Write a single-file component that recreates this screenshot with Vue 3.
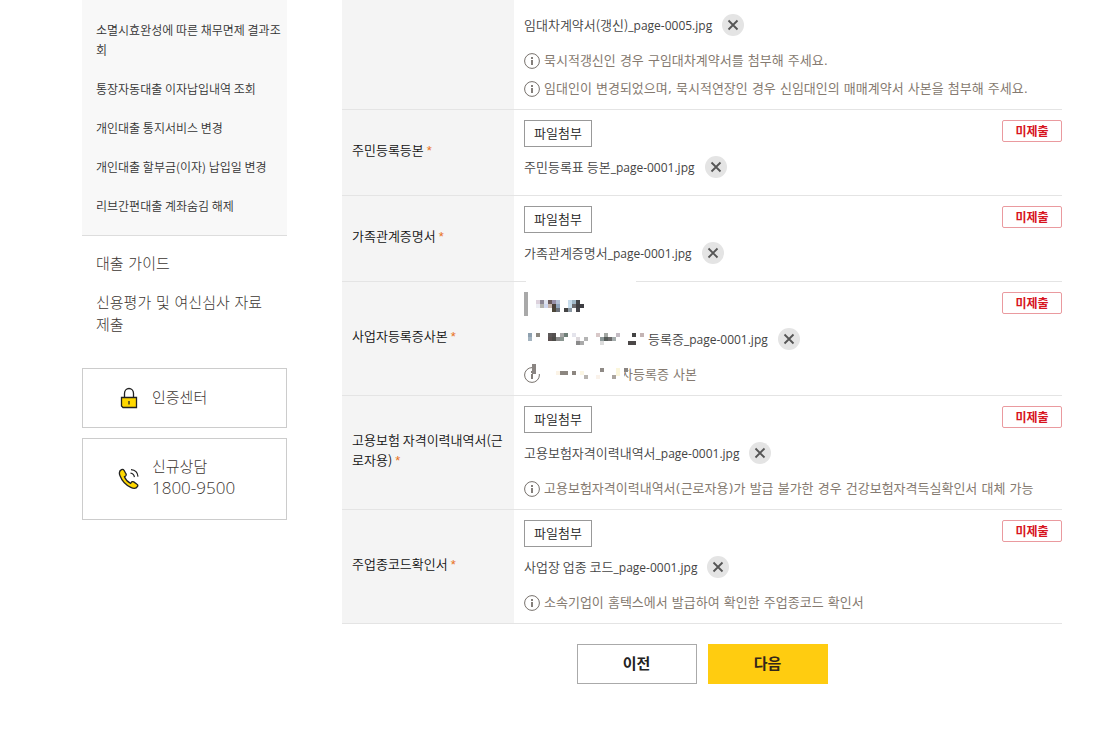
<script setup>
const serviceLinks = [
  '소멸시효완성에 따른 채무면제 결과조회',
  '통장자동대출 이자납입내역 조회',
  '개인대출 통지서비스 변경',
  '개인대출 할부금(이자) 납입일 변경',
  '리브간편대출 계좌숨김 해제',
]

const rows = [
  {
    id: 'lease',
    continued: true,
    file: ['임대차계약서(갱신)', '_page-0005.jpg'],
    notes: [
      '묵시적갱신인 경우 구임대차계약서를 첨부해 주세요.',
      '임대인이 변경되었으며, 묵시적연장인 경우 신임대인의 매매계약서 사본을 첨부해 주세요.',
    ],
  },
  { id: 'resident', label: '주민등록등본', file: ['주민등록표 등본', '_page-0001.jpg'], notes: [] },
  { id: 'family', label: '가족관계증명서', file: ['가족관계증명서', '_page-0001.jpg'], notes: [] },
  { id: 'business', label: '사업자등록증사본', masked: true, file: ['등록증', '_page-0001.jpg'], notes: ['자등록증 사본'] },
  {
    id: 'insurance',
    label: '고용보험 자격이력내역서(근로자용)',
    file: ['고용보험자격이력내역서', '_page-0001.jpg'],
    notes: ['고용보험자격이력내역서(근로자용)가 발급 불가한 경우 건강보험자격득실확인서 대체 가능'],
  },
  {
    id: 'industry',
    label: '주업종코드확인서',
    file: ['사업장 업종 코드', '_page-0001.jpg'],
    notes: ['소속기업이 홈텍스에서 발급하여 확인한 주업종코드 확인서'],
  },
]

// mosaic cells: x, y, colour
const titleCells = [
  [12, 8, '#ddd2dd'], [16, 8, '#8d8896'], [20, 8, '#e0e4f0'], [24, 8, '#6a5a5c'], [28, 8, '#9890a8'], [32, 8, '#b4c0d4'],
  [44, 8, '#c8dcec'], [48, 8, '#a0b8c8'], [52, 8, '#44464a'],
  [12, 12, '#eceef4'], [16, 12, '#b4b4b0'], [20, 12, '#d0d8f0'], [24, 12, '#c8b8b0'], [28, 12, '#4b4038'], [32, 12, '#90a4bc'],
  [44, 12, '#c8e0f0'], [48, 12, '#6c6c70'], [52, 12, '#3e3e42'], [56, 12, '#3e3e42'],
  [28, 16, '#4b4538'], [32, 16, '#6b7078'], [40, 16, '#444444'], [44, 16, '#8d99a4'], [52, 16, '#44444a'],
]
const fileCells = [
  [4, 0, '#8fa1b0'], [12, 0, '#8d8880'], [24, 0, '#5c5858'], [28, 0, '#555050'], [36, 0, '#a8a8a8'], [40, 0, '#6f7f78'],
  [48, 0, '#e4e4ec'], [72, 0, '#d8c8c8'], [80, 0, '#a4a8a4'], [92, 0, '#c4bcc4'], [108, 0, '#444444'], [116, 0, '#c4b4b4'],
  [4, 4, '#a4b4c0'], [24, 4, '#5c5050'], [28, 4, '#4c4c48'], [32, 4, '#8a8a8a'], [36, 4, '#8a9690'], [52, 4, '#dcd8dc'],
  [60, 4, '#b4b4b4'], [76, 4, '#8c9898'], [80, 4, '#555b58'], [84, 4, '#6b6b6b'], [88, 4, '#a4acac'],
  [52, 8, '#8a8a8a'], [56, 8, '#aaaaaa'], [76, 8, '#dddddd'], [104, 8, '#4c4848'], [108, 8, '#4c4848'],
]
const noteCells = [
  [36, 10, '#8c8680'], [40, 10, '#8c8680'], [48, 10, '#8c8680'], [60, 14, '#b8b4b0'],
  [76, 7, '#8f8a86'], [88, 14, '#aaa49e'], [100, 7, '#8a8582'],
  [32, 10, '#fbf3e6'], [56, 10, '#fbf6e4'], [72, 14, '#faf2ea'], [92, 7, '#fbf6dc'], [92, 11, '#fbf6dc'],
]
</script>

<template>
  <div class="page">
    <aside class="side">
      <ul class="services">
        <li v-for="s in serviceLinks" :key="s"><a href="#">{{ s }}</a></li>
      </ul>
      <ul class="guides">
        <li><a href="#">대출 가이드</a></li>
        <li><a href="#">신용평가 및 여신심사 자료제출</a></li>
      </ul>
      <a class="box" href="#">
        <svg class="box-icon" viewBox="0 -1 24 24" aria-hidden="true">
          <path d="M7.500 11.500V7.500a4.500 5 0 0 1 9 0V11.500" fill="none" stroke="#222" stroke-width="1.300" />
          <path d="M4.500 11.500h15v10h-13.500l-1.500-1.500z" fill="#ffd800" stroke="#222" stroke-width="1.300" />
          <path d="M12 15v3.500" stroke="#222" stroke-width="1.300" />
        </svg>
        <span>인증센터</span>
      </a>
      <a class="box tall" href="#">
        <svg class="box-icon" viewBox="0 -2 24 24" aria-hidden="true">
          <path d="M4.500 2.600C2.500 3.600 1.900 6 3 8.800c2 5.200 5.700 9.300 10.800 11.600 2.800 1.300 5.600 1 6.700-1 .5-.9.300-1.700-.5-2.200l-3.300-2.300c-.9-.6-1.800-.4-2.400.5l-.7 1c-3-1.400-5-3.800-6.200-6.600l1.200-.9c.7-.6.8-1.400.3-2.200L7 3.300c-.6-1-1.500-1.200-2.500-.7z" fill="#ffd800" stroke="#222" stroke-width="1.300" />
          <path d="M13.500 6.200c2.200.3 3.600 1.800 3.900 4M14 2.600c4 .3 6.700 3 7 7" fill="none" stroke="#222" stroke-width="1.200" />
        </svg>
        <span>신규상담<br /><span class="phone">1800-9500</span></span>
      </a>
    </aside>

    <main class="main">
      <table class="docs">
        <colgroup><col class="col-label" /><col /></colgroup>
        <tbody>
          <tr v-for="r in rows" :key="r.id" :class="{ continued: r.continued, masked: r.masked }">
            <th scope="row">
              <template v-if="r.label">{{ r.label }}<span class="req">*</span></template>
            </th>
            <td>
              <span v-if="!r.continued" class="status">미제출</span>
              <svg v-if="r.masked" class="mask-title" viewBox="0 0 68 27" aria-hidden="true">
                <path d="M0 0h4v24H0z" fill="#a9a9a9" />
                <rect v-for="(c, i) in titleCells" :key="i" :x="c[0]" :y="c[1]" width="4" height="4" :fill="c[2]" />
              </svg>
              <button v-else-if="!r.continued" type="button" class="attach">파일첨부</button>
              <div class="file">
                <svg v-if="r.masked" class="mask-file" viewBox="0 0 124 12" aria-hidden="true">
                  <rect v-for="(c, i) in fileCells" :key="i" :x="c[0]" :y="c[1]" width="4" height="4" :fill="c[2]" />
                </svg>
                <span class="name">{{ r.file[0] }}<span class="ext">{{ r.file[1] }}</span></span>
                <button type="button" class="remove" aria-label="첨부파일 삭제">
                  <svg viewBox="0 0 22 22" aria-hidden="true"><path d="M6.500 6.500l9 9M15.500 6.500l-9 9" stroke="#555" stroke-width="1.800" /></svg>
                </button>
              </div>
              <ul v-if="r.notes.length" class="notes">
                <li v-for="n in r.notes" :key="n">
                  <svg class="info" viewBox="0 0 16 16" aria-hidden="true">
                    <circle cx="8" cy="8" r="7.400" fill="none" stroke="#77716c" />
                    <path d="M8 4v2M8 7v5" stroke="#66605b" stroke-width="1.600" />
                  </svg>
                  <span class="note">{{ n }}</span>
                  <svg v-if="r.masked" class="mask-note" viewBox="0 0 104 28" aria-hidden="true">
                    <path d="M9 2h11v11H12V9H9zM20 2h80v24H20z" fill="#fff" />
                    <path d="M8 3h4v10H8z" fill="#8a8582" />
                    <rect v-for="(c, i) in noteCells" :key="i" :x="c[0]" :y="c[1]" width="4" height="4" :fill="c[2]" />
                  </svg>
                </li>
              </ul>
            </td>
          </tr>
        </tbody>
      </table>
      <div class="actions">
        <button type="button" class="prev">이전</button>
        <button type="button" class="next">다음</button>
      </div>
    </main>
  </div>
</template>

<style>
body { background: #fff; }
</style>

<style scoped>
.page {
  display: flex;
  gap: 55px;
  padding: 0 50px 56px 82px;
  color: #333;
  font-family: "Noto Sans CJK KR", sans-serif;
  font-size: 13px;
  font-weight: 350;
}
ul { list-style: none; margin: 0; padding: 0; }
a { color: inherit; text-decoration: none; }
button { font-family: inherit; font-weight: inherit; cursor: pointer; margin: 0; }

.side { flex: 0 0 205px; }
.services {
  display: flex;
  flex-direction: column;
  gap: 19px;
  padding: 20px 4px 19px 14px;
  background: #f8f8f8;
  border-bottom: 1px solid #ddd;
  font-size: 12px;
  line-height: 20px;
}
.guides {
  display: flex;
  flex-direction: column;
  gap: 17px;
  padding: 17px 14px 32px;
  color: #3c3632;
  font-family: "DejaVu Sans", "Noto Sans CJK KR", sans-serif;
  font-size: 15px;
  font-weight: 300;
  line-height: 22px;
}
.box {
  display: flex;
  align-items: center;
  gap: 11px;
  box-sizing: border-box;
  height: 60px;
  padding: 0 34px 2px;
  border: 1px solid #ccc;
  color: #3c3632;
  font-size: 15px;
  font-weight: 300;
  line-height: 22px;
}
.box.tall { height: 82px; margin-top: 10px; padding-bottom: 4px; }
.box-icon { width: 24px; height: 24px; }
.phone { font-family: "Open Sans", sans-serif; font-size: 17px; }

.main { flex: 1; min-width: 0; }
.docs { width: 100%; border-collapse: separate; border-spacing: 0; table-layout: fixed; }
.col-label { width: 172px; }
th, td { border-bottom: 1px solid #e4e4e4; }
th {
  padding: 0 10px 4px;
  background: #f4f4f4;
  color: #111;
  font-weight: inherit;
  line-height: 20px;
  text-align: left;
}
.req {
  margin-left: 3px;
  color: #e8701a;
  font-family: "Liberation Sans", sans-serif;
}
td { position: relative; padding: 10px 10px 6px; vertical-align: top; }
.continued td { padding-top: 13px; }
.masked td::before {
  content: "";
  position: absolute;
  top: -1px;
  left: 12px;
  width: 110px;
  height: 1px;
  background: #fff;
}
.attach {
  display: block;
  width: 68px;
  height: 27px;
  padding: 0 0 2px;
  border: 1px solid #999;
  background: #fff;
  color: #222;
  font-size: 13px;
}
.status {
  position: absolute;
  top: 10px;
  right: 0;
  box-sizing: border-box;
  width: 60px;
  border: 1px solid #ea9a9f;
  border-radius: 2px;
  color: #d7141e;
  font-size: 12px;
  font-weight: 700;
  line-height: 20px;
  text-align: center;
}
.file {
  display: flex;
  align-items: center;
  height: 22px;
  margin: 9px 0 11px;
  color: #444;
}
.continued .file { margin-top: 1px; }
.name { padding-bottom: 2px; }
.ext { font-family: "Open Sans", sans-serif; font-size: 12px; font-weight: 400; }
.remove {
  width: 22px;
  height: 22px;
  margin-left: 10px;
  padding: 0;
  border: 0;
  border-radius: 50%;
  background: #e4e4e4;
}
.remove svg { display: block; width: 22px; height: 22px; }
.notes {
  color: #857a70;
  font-family: "DejaVu Sans", "Noto Sans CJK KR", sans-serif;
  font-weight: 400;
  line-height: 28px;
}
.notes li { position: relative; display: flex; align-items: center; gap: 4px; height: 28px; }
.info { width: 16px; height: 16px; }
.masked .note { padding-left: 77px; }
.mask-title { display: block; width: 68px; height: 27px; }
.mask-file { width: 124px; height: 12px; }
.mask-note { position: absolute; top: 0; left: 0; width: 104px; height: 28px; }

.actions { display: flex; justify-content: center; gap: 11px; padding-top: 20px; }
.actions button { width: 120px; height: 40px; padding: 0 0 3px; font-size: 15px; font-weight: 700; }
.prev { border: 1px solid #aaa; background: #fff; color: #222; }
.next { border: 0; background: #ffcc10; color: #33261a; }
</style>
